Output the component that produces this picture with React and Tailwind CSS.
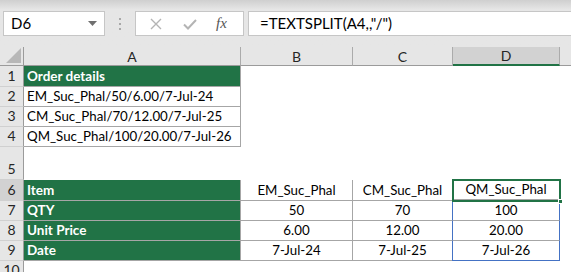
import React from 'react';

const font = { fontFamily: 'Lato, "Liberation Sans", sans-serif' };

const cols = ['A', 'B', 'C', 'D'];

function ColHead({ label, active }) {
  return (
    <div
      className={
        'flex items-center justify-center border-r border-[#ababab] text-[14px] text-[#262626] ' +
        (active ? 'bg-[#d2d2d2] border-b-2 border-b-[#217346]' : 'bg-[#e6e6e6] border-b border-b-[#9b9b9b]')
      }
    >
      {label}
    </div>
  );
}

function RowHead({ n, active }) {
  return (
    <div
      className={
        'flex items-end justify-center pb-[1px] border-r border-[#9b9b9b] border-b border-b-[#d0d0d0] text-[14px] leading-[18px] text-[#262626] whitespace-nowrap ' +
        (active ? 'bg-[#d2d2d2]' : 'bg-[#e6e6e6]')
      }
    >
      {n}
    </div>
  );
}

function Green({ children }) {
  return (
    <div className="flex items-end pl-[3px] pb-[1px] bg-[#217346] text-white font-bold text-[13.5px] leading-[18px] whitespace-nowrap border-r border-b border-[#a6a6a6]">
      {children}
    </div>
  );
}

function Cell({ children, center, boxed }) {
  return (
    <div
      className={
        'flex items-end pb-[1px] text-[13.3px] leading-[18px] text-black bg-white whitespace-nowrap ' +
        (center ? 'justify-center ' : 'pl-[3px] ') +
        (boxed ? 'border-r border-b border-[#a6a6a6]' : '')
      }
    >
      {children}
    </div>
  );
}

const Blank = () => <div className="bg-white" />;

export default function App() {
  const table = [
    ['QTY', '50', '70', '100'],
    ['Unit Price', '6.00', '12.00', '20.00'],
    ['Date', '7-Jul-24', '7-Jul-25', '7-Jul-26'],
  ];

  return (
    <div className="w-[571px] h-[272px] overflow-hidden bg-white" style={font}>
      {/* formula bar */}
      <div className="h-[47px] bg-gradient-to-b from-[#cfcfcf] via-[#e6e6e6] via-[20%] to-[#e6e6e6] flex items-start pt-[11px]">
        <div className="ml-[3px] w-[102px] h-[25px] bg-white border border-[#c6c6c6] flex items-center justify-between pl-[7px] pr-[7px] text-[15px] text-black">
          <span>D6</span>
          <svg width="9" height="5" viewBox="0 0 9 5"><path d="M0 0h9L4.5 5z" fill="#6f6f6f" /></svg>
        </div>
        <div className="w-[30px] h-[25px] flex flex-col items-center justify-center gap-[3px]">
          <span className="w-[2px] h-[2px] bg-[#a8a8a8]" />
          <span className="w-[2px] h-[2px] bg-[#a8a8a8]" />
          <span className="w-[2px] h-[2px] bg-[#a8a8a8]" />
        </div>
        <div className="w-[109px] h-[25px] bg-white border border-[#c6c6c6] flex items-center">
          <svg className="ml-[14px]" width="12" height="12" viewBox="0 0 12 12">
            <path d="M1 1L11 11M11 1L1 11" stroke="#b4b4b4" strokeWidth="1.4" fill="none" />
          </svg>
          <svg className="ml-[21px]" width="14" height="12" viewBox="0 0 14 12">
            <path d="M1 6.5L5 10.5L13 2" stroke="#b4b4b4" strokeWidth="2" fill="none" />
          </svg>
          <span className="ml-[19px] text-[15px] italic text-[#555]" style={{ fontFamily: '"Liberation Serif", serif' }}>
            fx
          </span>
        </div>
        <div className="ml-[4px] flex-1 h-[25px] bg-white border border-[#c6c6c6] border-r-0 flex items-center pl-[11px] text-[15px] text-black whitespace-nowrap">
          =TEXTSPLIT(A4,,"/")
        </div>
      </div>

      {/* sheet */}
      <div className="grid grid-cols-[24px_217px_112px_100px_107px_1fr] grid-rows-[19px_21px_20px_20px_20px_33px_21px_20px_20px_20px_20px]">
        <div className="bg-[#e6e6e6] border-r border-b border-[#9b9b9b] flex items-end justify-end pr-[2px] pb-[2px]">
          <svg width="15" height="15" viewBox="0 0 15 15"><path d="M15 0V15H0z" fill="#b7b7b7" /></svg>
        </div>
        {cols.map((c) => (
          <ColHead key={c} label={c} active={c === 'D'} />
        ))}
        <div className="bg-[#e6e6e6] border-b border-[#9b9b9b]" />

        {/* row 1 */}
        <RowHead n={1} />
        <Green>Order details</Green>
        <Blank /><Blank /><Blank /><Blank />

        {['EM_Suc_Phal/50/6.00/7-Jul-24', 'CM_Suc_Phal/70/12.00/7-Jul-25', 'QM_Suc_Phal/100/20.00/7-Jul-26'].map((t, i) => (
          <React.Fragment key={t}>
            <RowHead n={i + 2} />
            <Cell boxed>{t}</Cell>
            <Blank /><Blank /><Blank /><Blank />
          </React.Fragment>
        ))}

        <RowHead n={5} />
        <Blank /><Blank /><Blank /><Blank /><Blank />

        {/* row 6 */}
        <RowHead n={6} active />
        <Green>Item</Green>
        <Cell center boxed>EM_Suc_Phal</Cell>
        <Cell center boxed>CM_Suc_Phal</Cell>
        <div className="relative flex flex-col">
          <Cell center boxed>QM_Suc_Phal</Cell>
          <div className="absolute left-[-1px] top-[-1px] right-[-1px] bottom-[-1px] border-2 border-[#217346]" />
          <div className="absolute right-[-3px] bottom-[-3px] w-[5px] h-[5px] bg-[#217346] border border-white" />
        </div>
        <Blank />

        {table.map((r, i) => (
          <React.Fragment key={r[0]}>
            <RowHead n={i + 7} />
            <Green>{r[0]}</Green>
            <Cell center boxed>{r[1]}</Cell>
            <Cell center boxed>{r[2]}</Cell>
            <div
              className={
                'flex items-end justify-center pb-[1px] text-[13.3px] leading-[18px] text-black bg-white border-r border-[#4472c4] ml-[-1px] border-l ' +
                (i === 2 ? 'border-b border-b-[#4472c4]' : 'border-b border-b-[#a6a6a6]')
              }
            >
              {r[3]}
            </div>
            <Blank />
          </React.Fragment>
        ))}

        <RowHead n={10} />
        <Blank /><Blank /><Blank /><Blank /><Blank />
      </div>
    </div>
  );
}
